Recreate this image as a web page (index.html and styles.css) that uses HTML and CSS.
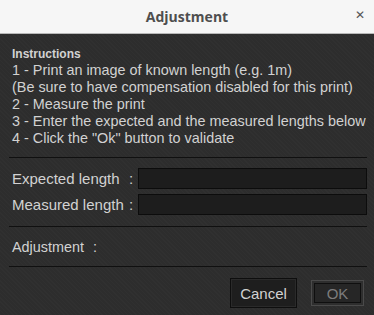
FILE: index.html
```html
<!DOCTYPE html>
<html>
  <head>
    <title>Adjustment</title>
    <link rel="stylesheet" href="styles.css">
  </head>
  <body>
    <div class="titlebar">
      <span class="title">Adjustment</span>
      <span class="close">&#x2715;</span>
    </div>
    <div class="dialog">
      <div class="instructions">
        <div class="heading">Instructions</div>
        <div>1 - Print an image of known length (e.g. 1m)</div>
        <div>(Be sure to have compensation disabled for this print)</div>
        <div>2 - Measure the print</div>
        <div>3 - Enter the expected and the measured lengths below</div>
        <div>4 - Click the "Ok" button to validate</div>
      </div>
      <hr class="sep" />
      <div class="form">
        <div class="row">
          <label for="expected">Expected length</label>
          <span class="colon">:</span>
          <input type="text" id="expected" />
        </div>
        <div class="row">
          <label for="measured">Measured length</label>
          <span class="colon">:</span>
          <input type="text" id="measured" />
        </div>
      </div>
      <hr class="sep" />
      <div class="result">
        <span>Adjustment</span>
        <span class="colon">:</span>
      </div>
      <hr class="sep" />
      <div class="buttons">
        <button class="btn">Cancel</button>
        <button class="btn ok" disabled>OK</button>
      </div>
    </div>
  </body>
</html>
```
FILE: styles.css
```css
body {
  margin: 0;
  width: 374px;
  height: 315px;
  overflow: hidden;
  font-family: "Liberation Sans", Arial, sans-serif;
  background-color: #2d2d2d;
}

.titlebar {
  height: 33px;
  background-color: #f6f6f6;
  border-bottom: 1px solid #b8b8b8;
  display: flex;
  align-items: center;
  justify-content: center;
  position: relative;
}

.title {
  font-family: "Open Sans", "DejaVu Sans", sans-serif;
  font-weight: bold;
  font-size: 14px;
  color: #4e4e4e;
}

.close {
  position: absolute;
  right: 9px;
  top: 8px;
  font-family: "DejaVu Sans", sans-serif;
  font-size: 12px;
  color: #555;
}

.dialog {
  height: 281px;
  padding: 10px 7px 0 9px;
  box-sizing: border-box;
  color: #d2d2d2;
  background-color: #2d2d2d;
  background-image: repeating-linear-gradient(45deg, rgba(255, 255, 255, 0.015) 0 1px, transparent 1px 3px);
}

.instructions {
  padding-left: 3px;
  font-size: 14.4px;
  line-height: 17px;
  white-space: nowrap;
}

.heading {
  font-size: 12px;
  font-weight: bold;
  line-height: 14px;
  margin: 3px 0 1px;
}

.sep {
  border: none;
  border-top: 1px solid #101010;
  margin: 0;
}

.instructions + .sep {
  margin-top: 10px;
}

.form {
  padding: 10px 0 11px 3px;
  display: flex;
  flex-direction: column;
  gap: 5px;
}

.row {
  display: flex;
  align-items: center;
  font-size: 15px;
}

.row label {
  width: 117px;
}

.colon {
  width: 9px;
}

.row input {
  width: 229px;
  height: 21px;
  box-sizing: border-box;
  background-color: #1d1d1d;
  border: 1px solid #0c0c0c;
  outline: none;
  margin: 0;
}

.result {
  padding: 12px 0 10px 3px;
  font-size: 14.4px;
  line-height: 17px;
  display: flex;
  gap: 9px;
}

.buttons {
  display: flex;
  justify-content: flex-end;
  align-items: center;
  gap: 14px;
  padding: 11px 3px 0 0;
}

.btn {
  font-family: "Liberation Sans", Arial, sans-serif;
  font-size: 15px;
  color: #d2d2d2;
  background-color: #1e1e1e;
  border: 1px solid #0e0e0e;
  box-shadow: inset 0 0 0 1px #2a2a2a;
  width: 67px;
  height: 30px;
  padding: 0;
}

.btn.ok {
  width: 53px;
  height: 26px;
  color: #7c7c7c;
  background-color: #262626;
  border: 1px solid #4a4a4a;
  box-shadow: inset 0 0 0 2px #2e2e2e, inset 0 0 0 3px #0f0f0f;
}
```
